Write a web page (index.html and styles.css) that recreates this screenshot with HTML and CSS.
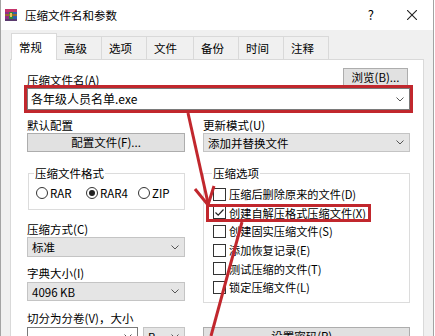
FILE: index.html
```html
<!DOCTYPE html>
<html>
<head lang="zh">
    <meta charset="UTF-8">
    <title>压缩文件名和参数</title>
    <link rel="stylesheet" href="styles.css">
</head>
<body>
<div class="window">
    <div class="titlebar">
        <svg class="app-icon" width="12" height="12" viewBox="0 0 12 12">
            <rect x="0" y="0" width="4" height="12" fill="#8e2f86"/>
            <rect x="4" y="0" width="4" height="12" fill="#2f8a3e"/>
            <rect x="8" y="0" width="4" height="12" fill="#2b5fae"/>
            <rect x="0" y="0" width="12" height="3" fill="#c4346c"/>
            <rect x="0" y="5" width="12" height="2" fill="#9a6a2e"/>
            <rect x="5" y="4" width="2" height="4" fill="#e8c25a"/>
            <rect x="0" y="10" width="12" height="2" fill="#5a3a6e"/>
        </svg>
        <span class="caption">压缩文件名和参数</span>
        <span class="help">?</span>
        <svg class="close" width="10" height="10" viewBox="0 0 10 10">
            <path d="M0 0 L10 10 M10 0 L0 10" stroke="#222" stroke-width="1.1"/>
        </svg>
    </div>

    <div class="tabs">
        <span class="tab active">常规</span>
        <span class="tab">高级</span>
        <span class="tab">选项</span>
        <span class="tab wide">文件</span>
        <span class="tab">备份</span>
        <span class="tab">时间</span>
        <span class="tab">注释</span>
    </div>

    <div class="panel">
        <div class="name-row">
            <span class="label name-label">压缩文件名(A)</span>
            <button class="btn browse">浏览(B)...</button>
        </div>
        <div class="combo edit marked">
            <span class="value">各年级人员名单.exe</span>
            <svg class="chev" width="8" height="5" viewBox="0 0 8 5"><polyline points="0.5,0.5 4,4 7.5,0.5" fill="none" stroke="#555"/></svg>
        </div>

        <div class="columns">
            <div class="col">
                <span class="label">默认配置</span>
                <button class="btn">配置文件(F)...</button>

                <fieldset class="group format">
                    <legend>压缩文件格式</legend>
                    <div class="radios">
                        <span class="radio r1"><i class="dot"></i>RAR</span>
                        <span class="radio r2"><i class="dot on"></i>RAR4</span>
                        <span class="radio"><i class="dot"></i>ZIP</span>
                    </div>
                </fieldset>

                <span class="label gap-l">压缩方式(C)</span>
                <div class="combo tall">
                    <span class="value">标准</span>
                    <svg class="chev" width="8" height="5" viewBox="0 0 8 5"><polyline points="0.5,0.5 4,4 7.5,0.5" fill="none" stroke="#555"/></svg>
                </div>

                <span class="label gap-m">字典大小(I)</span>
                <div class="combo dict">
                    <span class="value">4096 KB</span>
                    <svg class="chev" width="8" height="5" viewBox="0 0 8 5"><polyline points="0.5,0.5 4,4 7.5,0.5" fill="none" stroke="#555"/></svg>
                </div>

                <span class="label gap-s">切分为分卷(V)，大小</span>
                <div class="split">
                    <div class="combo white">
                        <span class="value"></span>
                        <svg class="chev" width="8" height="5" viewBox="0 0 8 5"><polyline points="0.5,0.5 4,4 7.5,0.5" fill="none" stroke="#555"/></svg>
                    </div>
                    <div class="combo unit">
                        <span class="value">B</span>
                        <svg class="chev" width="8" height="5" viewBox="0 0 8 5"><polyline points="0.5,0.5 4,4 7.5,0.5" fill="none" stroke="#555"/></svg>
                    </div>
                </div>
            </div>

            <div class="col">
                <span class="label">更新模式(U)</span>
                <div class="combo">
                    <span class="value">添加并替换文件</span>
                    <svg class="chev" width="8" height="5" viewBox="0 0 8 5"><polyline points="0.5,0.5 4,4 7.5,0.5" fill="none" stroke="#555"/></svg>
                </div>

                <fieldset class="group options">
                    <legend>压缩选项</legend>
                    <div class="check"><i class="box"></i>压缩后删除原来的文件(D)</div>
                    <div class="check marked"><i class="box"><svg width="11" height="11" viewBox="0 0 11 11"><polyline points="1.5,5.5 4.2,8.2 9.5,2.5" fill="none" stroke="#222" stroke-width="1.2"/></svg></i>创建自解压格式压缩文件(X)</div>
                    <div class="check"><i class="box"></i>创建固实压缩文件(S)</div>
                    <div class="check"><i class="box"></i>添加恢复记录(E)</div>
                    <div class="check"><i class="box"></i>测试压缩的文件(T)</div>
                    <div class="check"><i class="box"></i>锁定压缩文件(L)</div>
                </fieldset>

                <button class="btn password">设置密码(P)...</button>
            </div>
        </div>
    </div>

    <svg class="arrows" width="435" height="336" viewBox="0 0 435 336">
        <g fill="none" stroke="#c1272d" stroke-width="3">
            <path d="M188 113 L208 203"/>
            <path d="M195 189 L208 205 L214 186"/>
            <path d="M242 222 L211 336"/>
        </g>
    </svg>
</div>
</body>
</html>
```

FILE: styles.css
```css
body{
    margin: 0;
    padding: 0;
    background-color: #fff;
    font-family: "Noto Sans CJK SC", sans-serif;
    font-size: 11.5px;
    color: #000;
}
button{
    font-family: inherit;
    font-size: inherit;
    color: #000;
    padding: 0;
}
.window{
    position: relative;
    width: 434px;
    height: 336px;
    box-sizing: border-box;
    overflow: hidden;
    border-left: 1px #a3a3a3 solid;
    border-right: 1px #a3a3a3 solid;
    background-color: #f0f0f0;
}

/* title bar */
.titlebar{
    display: flex;
    align-items: center;
    height: 30px;
    background-color: #fff;
}
.app-icon{
    margin-left: 4px;
    margin-top: -1px;
}
.caption{
    margin-left: 8px;
    font-size: 11.5px;
    line-height: 14px;
}
.help{
    margin-left: auto;
    margin-right: 33px;
    font-size: 13px;
    line-height: 14px;
}
.close{
    margin-right: 16px;
}

/* tabs */
.tabs{
    position: relative;
    z-index: 1;
    display: flex;
    align-items: flex-end;
    height: 26px;
    margin: 3px 0 0 10px;
}
.tab{
    box-sizing: border-box;
    width: 46px;
    height: 23px;
    margin-left: -1px;
    padding-left: 7px;
    line-height: 22px;
    border: 1px #d9d9d9 solid;
    border-bottom: none;
    background-color: #f0f0f0;
}
.tab.wide{
    width: 48px;
}
.tab.active{
    height: 27px;
    margin-left: 0;
    margin-bottom: -1px;
    line-height: 26px;
    background-color: #fff;
}

/* panel */
.panel{
    margin: 0 9px;
    height: 300px;
    padding: 8px 13px 0 16px;
    border: 1px #d9d9d9 solid;
    background-color: #fff;
}
.label{
    display: block;
    line-height: 14px;
}
.name-row{
    display: flex;
    justify-content: space-between;
    align-items: flex-end;
}
.name-label{
    margin-bottom: -1px;
}
.btn{
    display: block;
    box-sizing: border-box;
    height: 19px;
    margin-top: 1px;
    line-height: 17px;
    border: 1px #adadad solid;
    background-color: #e1e1e1;
    text-align: center;
}
.browse{
    width: 65px;
    height: 18px;
    margin: 0 2px 0 0;
    line-height: 16px;
}
.password{
    margin-top: 24px;
}

/* combo boxes */
.combo{
    display: flex;
    align-items: center;
    box-sizing: border-box;
    height: 19px;
    margin-top: 1px;
    padding: 0 5px 0 4px;
    border: 1px #c4c4c4 solid;
    background-color: #e5e5e5;
}
.combo .value{
    flex: 1;
    line-height: 14px;
}
.combo .chev{
    flex: none;
}
.combo.edit{
    height: 22px;
    margin-top: 2px;
    padding-left: 3px;
    border-color: #7a7a7a;
    background-color: #fff;
}
.combo.edit .value{
    font-size: 12px;
}
.combo.tall{
    height: 20px;
}
.combo.dict{
    margin-top: 2px;
}
.combo.white{
    width: 111px;
    border-color: #7a7a7a;
    background-color: #fff;
}
.combo.unit{
    width: 42px;
}
.split{
    display: flex;
    gap: 5px;
    margin-top: 2px;
}
.split .combo{
    margin-top: 0;
}
.marked{
    outline: 3px #c1272d solid;
}

/* columns */
.columns{
    display: grid;
    grid-template-columns: 158px 207px;
    column-gap: 18px;
    margin-top: 8px;
}
.col{
    display: flex;
    flex-direction: column;
}
.gap-l{
    margin-top: 12px;
}
.gap-m{
    margin-top: 9px;
}
.gap-s{
    margin-top: 10px;
}

/* group boxes */
.group{
    margin: 14px 0 0 0;
    border: 1px #dcdcdc solid;
    min-width: 0;
}
.group legend{
    padding: 0 1px;
    line-height: 14px;
}
.format{
    margin-left: 1px;
    padding: 6px 0 9px 7px;
}
.format legend{
    margin-left: -2px;
}
.options{
    padding: 5px 0 5px 9px;
}
.options legend{
    margin-left: -1px;
}

/* radios */
.radios{
    display: flex;
    height: 14px;
    align-items: center;
}
.radio{
    display: flex;
    align-items: center;
    line-height: 14px;
}
.radio.r1{
    width: 50px;
}
.radio.r2{
    width: 52px;
}
.dot{
    position: relative;
    box-sizing: border-box;
    width: 12px;
    height: 12px;
    margin-right: 2px;
    border: 1px #333 solid;
    border-radius: 50%;
    background-color: #fff;
}
.dot.on::after{
    content: "";
    position: absolute;
    left: 2px;
    top: 2px;
    width: 6px;
    height: 6px;
    border-radius: 50%;
    background-color: #222;
}

/* checkboxes */
.check{
    display: flex;
    align-items: center;
    width: fit-content;
    height: 18.6px;
    font-size: 11.2px;
    line-height: 14px;
}
.box{
    display: flex;
    align-items: center;
    justify-content: center;
    box-sizing: border-box;
    width: 13px;
    height: 13px;
    margin-right: 3px;
    border: 1px #333 solid;
    background-color: #fff;
}
.check.marked{
    margin-left: -7px;
    padding: 0 5px 0 7px;
    outline-offset: -3px;
}

/* red arrows drawn over the dialog */
.arrows{
    position: absolute;
    left: -1px;
    top: 0;
    pointer-events: none;
}
```
